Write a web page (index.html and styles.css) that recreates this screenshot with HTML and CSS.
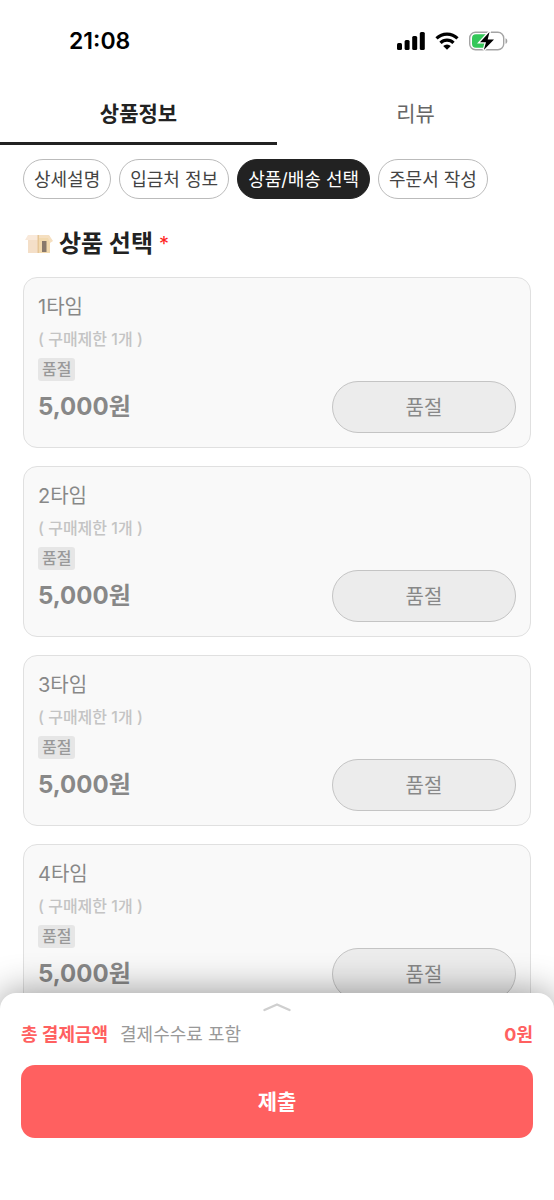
FILE: index.html
```html
<!DOCTYPE html>
<html lang="ko">
<head>
<meta charset="utf-8">
<meta name="viewport" content="width=device-width, initial-scale=1">
<title>상품 선택</title>
<link rel="stylesheet" href="styles.css">
</head>
<body>
<div class="app">
  <header class="status">
    <time class="clock">21:08</time>
    <div class="status-icons">
      <svg width="28" height="18" viewBox="0 0 28 18" aria-hidden="true">
        <rect x="0" y="11" width="5" height="7" rx="1.5"/>
        <rect x="7.600" y="8" width="5" height="10" rx="1.5"/>
        <rect x="15.200" y="4" width="5" height="14" rx="1.5"/>
        <rect x="22.800" y="0" width="5" height="18" rx="1.5"/>
      </svg>
      <svg width="24" height="18" viewBox="0 0 24 18" aria-hidden="true">
        <path d="M1.500 6.400a15 15 0 0 1 21 0M5.500 10.800a9.200 9.200 0 0 1 13 0" fill="none" stroke="#000" stroke-width="3.200"/>
        <path d="M12 17.800l-3.800-3.800a5.500 5.500 0 0 1 7.600 0z"/>
      </svg>
      <svg width="39" height="20" viewBox="0 0 39 20" aria-hidden="true">
        <rect x=".7" y="1.200" width="34" height="17.600" rx="5.800" fill="#fff" stroke="#a4a4a4" stroke-width="1.400"/>
        <path d="M7 3.200h10v13.600H7a4 4 0 0 1-4-4V7.200a4 4 0 0 1 4-4z" fill="#34c759"/>
        <path d="M36.500 7.200c2.400.8 2.400 4.800 0 5.600z" fill="#a4a4a4"/>
        <path d="M20.500 1L11 11.300h6L14.800 19 25 8.600h-6.300z" stroke="#fff" stroke-width="2.600" paint-order="stroke"/>
      </svg>
    </div>
  </header>

  <nav class="tabs">
    <a class="tab tab-active" href="#info" aria-current="page">상품정보</a>
    <a class="tab" href="#review">리뷰</a>
  </nav>

  <main class="content" id="info">
    <nav class="chips">
      <a class="chip" href="#detail">상세설명</a>
      <a class="chip" href="#deposit">입금처 정보</a>
      <a class="chip chip-active" href="#select">상품/배송 선택</a>
      <a class="chip" href="#order">주문서 작성</a>
    </nav>

    <h1 class="heading" id="select">
      <svg width="28" height="20" viewBox="0 0 28 20" aria-hidden="true">
        <path d="M3 2h10v17H3z" fill="#f4dfc8"/>
        <path d="M13 2h12v17H13z" fill="#f2d9ae"/>
        <path d="M3 1h10v5H0z" fill="#f9e9da"/>
        <path d="M13 1h11l4 6-3 2-2-5H13z" fill="#f5dfc0"/>
        <path d="M12.500 1h1.500v18h-1.500z" fill="#e6c697"/>
        <path d="M17 7h4.500v11H17z" fill="#88786b"/>
      </svg>
      <span>상품 선택</span><span class="required">*</span>
    </h1>

    <ul class="cards">
      <li class="card">
        <h2 class="name">1타임</h2>
        <p class="limit">( 구매제한 1개 )</p>
        <span class="tag">품절</span>
        <div class="buy"><strong class="price">5,000원</strong><button class="soldout" type="button" disabled>품절</button></div>
      </li>
      <li class="card">
        <h2 class="name">2타임</h2>
        <p class="limit">( 구매제한 1개 )</p>
        <span class="tag">품절</span>
        <div class="buy"><strong class="price">5,000원</strong><button class="soldout" type="button" disabled>품절</button></div>
      </li>
      <li class="card">
        <h2 class="name">3타임</h2>
        <p class="limit">( 구매제한 1개 )</p>
        <span class="tag">품절</span>
        <div class="buy"><strong class="price">5,000원</strong><button class="soldout" type="button" disabled>품절</button></div>
      </li>
      <li class="card">
        <h2 class="name">4타임</h2>
        <p class="limit">( 구매제한 1개 )</p>
        <span class="tag">품절</span>
        <div class="buy"><strong class="price">5,000원</strong><button class="soldout" type="button" disabled>품절</button></div>
      </li>
    </ul>
  </main>

  <footer class="sheet">
    <button class="handle" type="button" aria-label="펼치기">
      <svg width="28" height="10" viewBox="0 0 28 10" aria-hidden="true">
        <path d="M1.500 8L14 2.500 26.500 8" fill="none" stroke="#cfcfcf" stroke-width="2.400" stroke-linecap="round" stroke-linejoin="round"/>
      </svg>
    </button>
    <div class="total">
      <strong>총 결제금액</strong>
      <span class="fee">결제수수료 포함</span>
      <strong class="amount">0원</strong>
    </div>
    <button class="submit" type="button">제출</button>
  </footer>
</div>
</body>
</html>
```
FILE: styles.css
```css
* {
  box-sizing: border-box;
}

body,
h1,
h2,
p,
ul {
  margin: 0;
  padding: 0;
}

body {
  background: #fff;
  color: #222;
  font-family: Inter, "Noto Sans CJK KR", sans-serif;
}

button {
  font-family: inherit;
}

a {
  color: inherit;
  text-decoration: none;
}

svg {
  display: block;
  flex: none;
}

.app {
  display: flex;
  flex-direction: column;
  height: 100vh;
  overflow: hidden;
}

.status {
  display: flex;
  justify-content: space-between;
  align-items: center;
  height: 82px;
  padding: 0 46px 0 69px;
  color: #000;
}

.clock {
  font-size: 23px;
  font-weight: 600;
  line-height: 30px;
}

.status-icons {
  display: flex;
  align-items: center;
  gap: 10px;
}

.tabs {
  display: flex;
}

.tab {
  flex: 1;
  height: 63px;
  border-bottom: 3px solid transparent;
  color: #666;
  font-size: 21px;
  line-height: 64px;
  text-align: center;
}

.tab-active {
  border-color: #222;
  color: #222;
  font-weight: 700;
}

.content {
  flex: 1;
  min-height: 0;
  overflow: hidden;
  padding: 14px 23px 0;
}

.chips {
  display: flex;
  gap: 8px;
  white-space: nowrap;
}

.chip {
  height: 40px;
  padding: 0 10px;
  border: 1px solid #bbb;
  border-radius: 20px;
  color: #444;
  font-size: 18px;
  line-height: 40px;
}

.chip-active {
  border-color: #222;
  background: #222;
  color: #fff;
}

.heading {
  display: flex;
  align-items: center;
  gap: 6px;
  height: 78px;
  padding: 12px 0 0 2px;
  font-size: 24px;
  font-weight: 700;
  line-height: 36px;
}

.required {
  color: #ff1f1f;
  font-size: 20px;
  font-weight: 400;
}

.cards {
  display: grid;
  gap: 18px;
  list-style: none;
}

.card {
  display: flex;
  flex-direction: column;
  align-items: flex-start;
  padding: 14px;
  border: 1px solid #e0e0e0;
  border-radius: 14px;
  background: #f9f9f9;
}

.name {
  color: #888;
  font-size: 20px;
  font-weight: 400;
  line-height: 30px;
}

.limit {
  margin-top: 6px;
  color: #c4c4c4;
  font-size: 16px;
  font-weight: 500;
  line-height: 22px;
}

.tag {
  margin-top: 8px;
  padding: 0 4px;
  border-radius: 3px;
  background: #e6e6e6;
  color: #999;
  font-size: 16px;
  font-weight: 500;
  line-height: 23px;
}

.buy {
  display: flex;
  justify-content: space-between;
  align-items: center;
  align-self: stretch;
}

.price {
  color: #888;
  font-size: 24px;
  font-weight: 700;
  line-height: 36px;
}

.soldout {
  flex: 0 1 184px;
  height: 52px;
  padding: 0 0 2px;
  border: 1px solid #c4c4c4;
  border-radius: 26px;
  background: #ececec;
  color: #888;
  font-size: 20px;
}

.sheet {
  position: relative;
  margin-top: -16px;
  padding: 0 21px 62px;
  border-radius: 16px 16px 0 0;
  background: #fff;
  box-shadow: 0 0 36px rgba(0, 0, 0, 0.42);
}

.handle {
  display: flex;
  justify-content: center;
  width: 100%;
  padding: 9px 0 0;
  border: 0;
  background: none;
}

.total {
  display: flex;
  align-items: baseline;
  gap: 12px;
  padding: 8px 0 15px;
  color: #ff6060;
  font-size: 18px;
  line-height: 30px;
}

.fee {
  color: #999;
}

.amount {
  margin-left: auto;
}

.submit {
  display: block;
  width: 100%;
  height: 73px;
  padding: 0 0 4px;
  border: 0;
  border-radius: 14px;
  background: #ff6060;
  color: #fff;
  font-size: 21px;
  font-weight: 700;
}
```
